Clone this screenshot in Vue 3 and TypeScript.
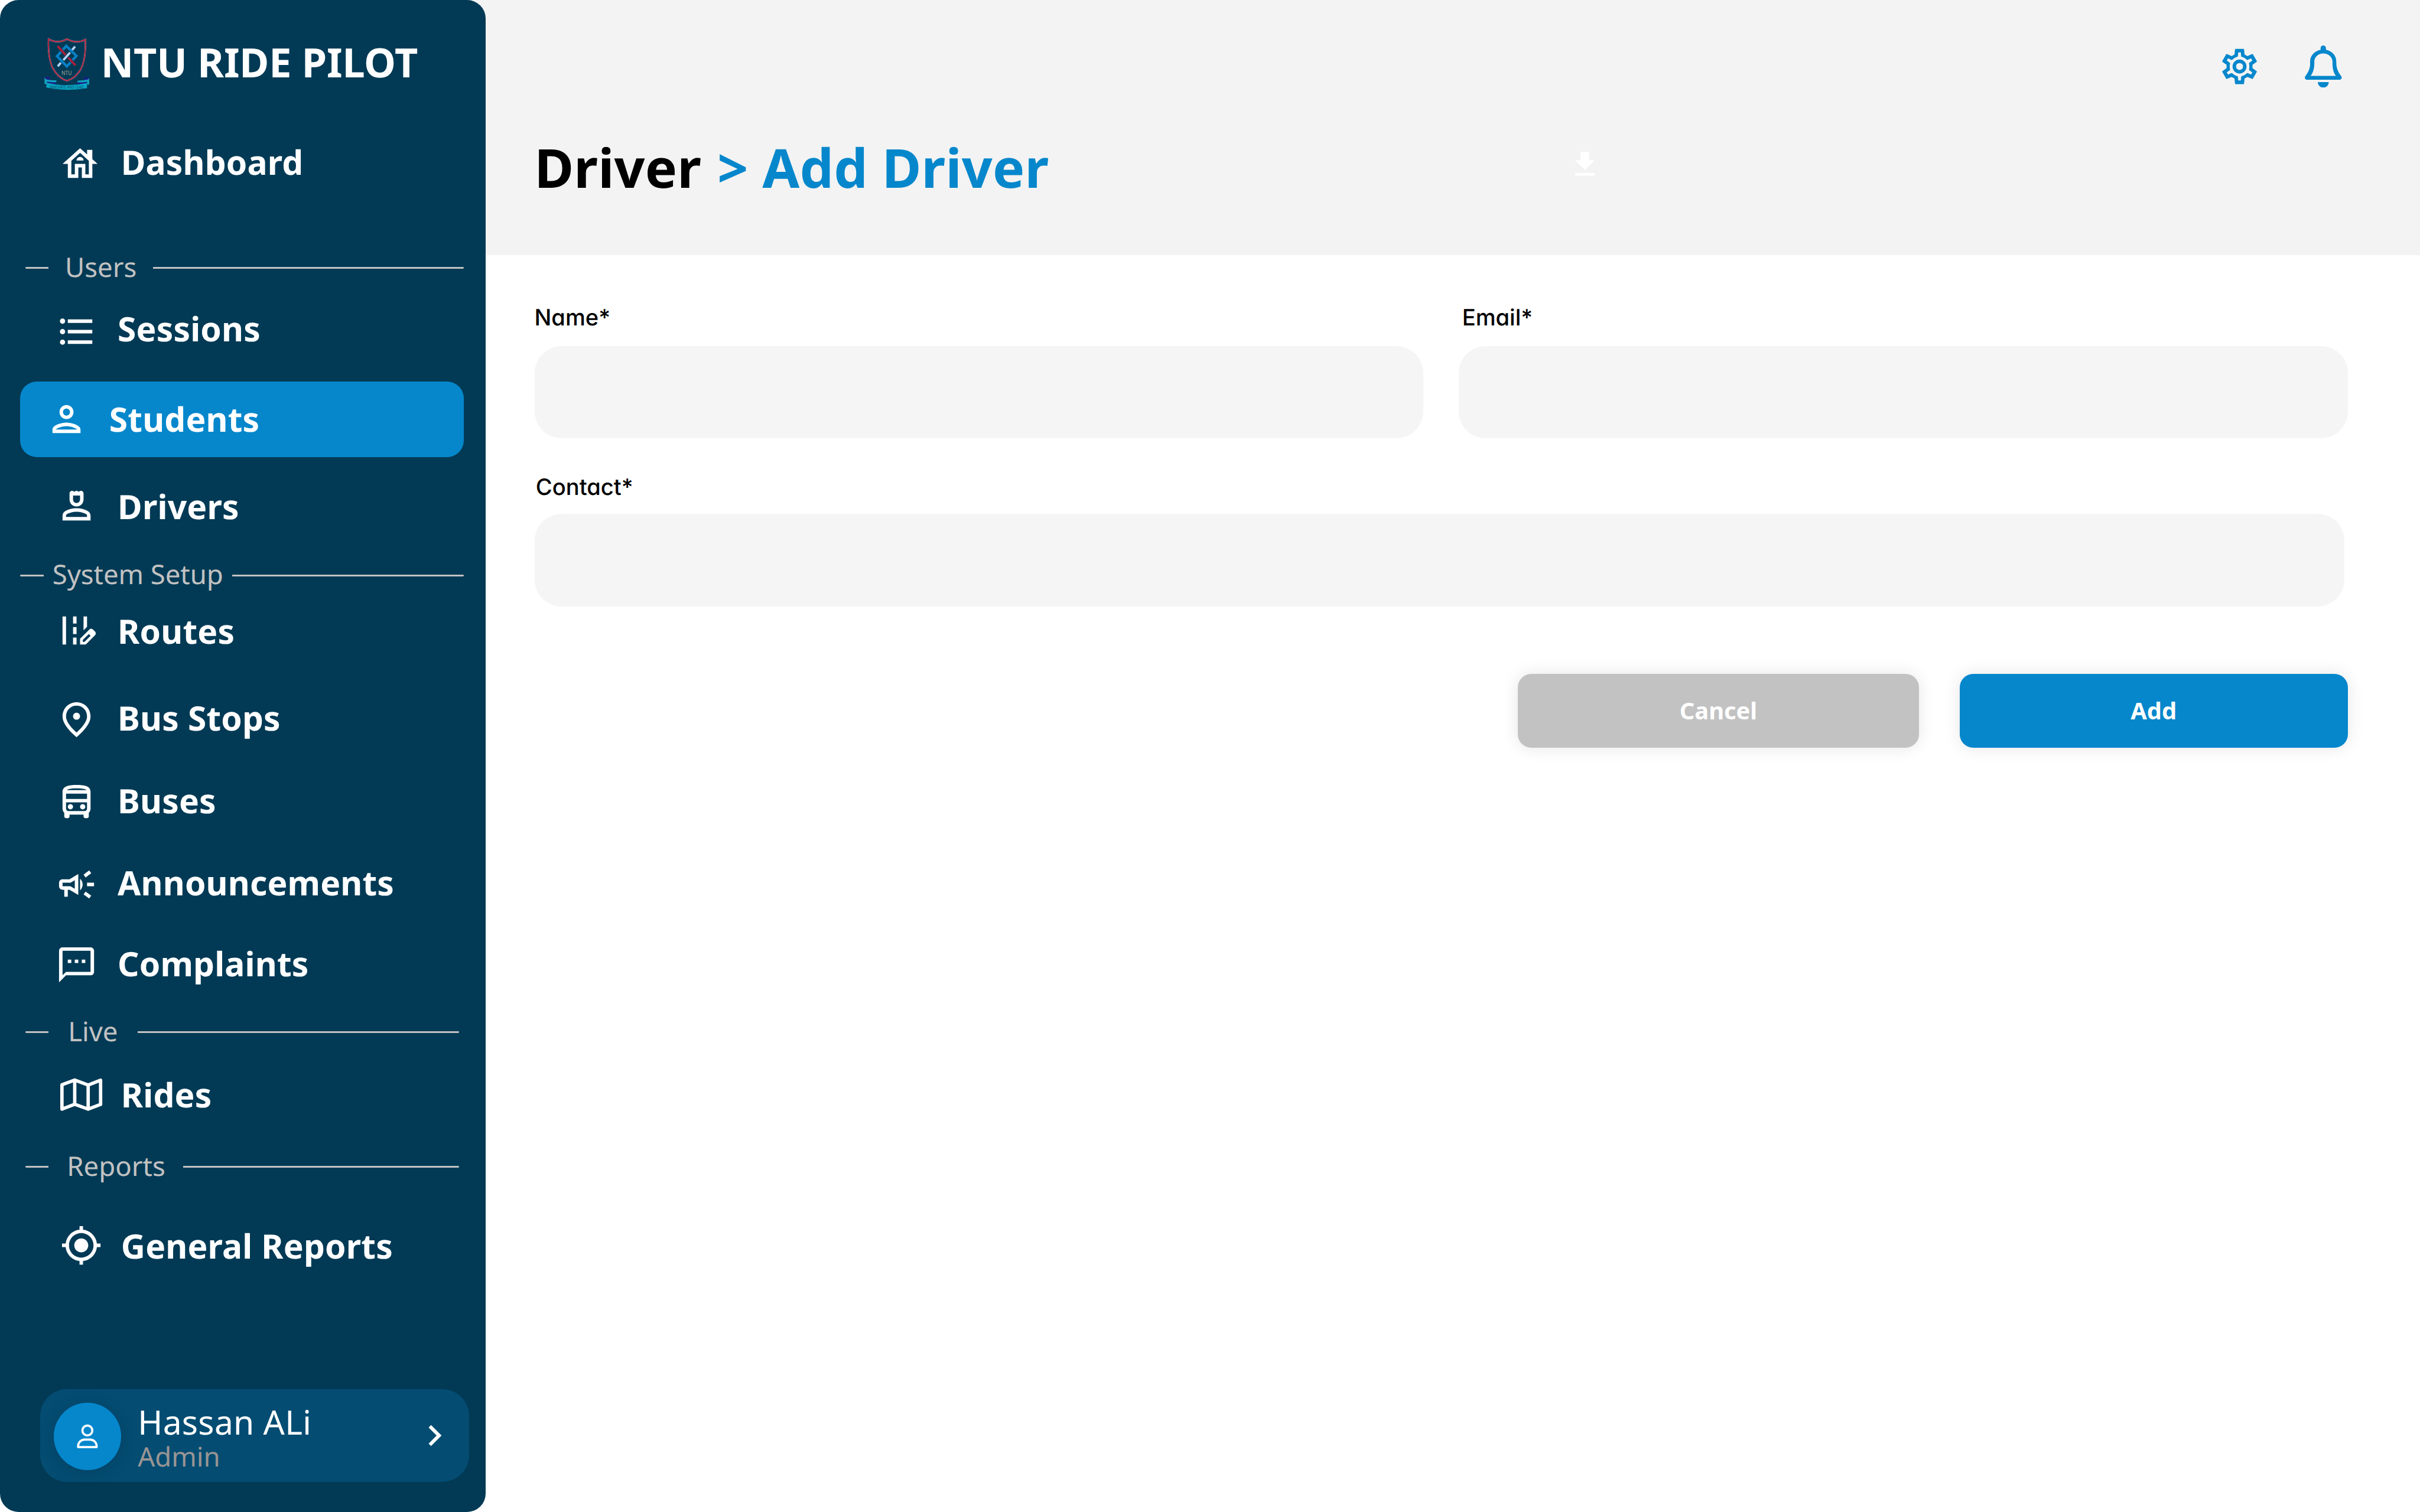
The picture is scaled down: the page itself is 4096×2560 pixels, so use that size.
<script setup lang="ts">
import { ref } from 'vue'

interface NavLink {
  kind: 'link'
  key: string
  label: string
  icon: string
}

interface NavSection {
  kind: 'section'
  key: string
  label: string
}

const entries: (NavLink | NavSection)[] = [
  {
    kind: 'link',
    key: 'dashboard',
    label: 'Dashboard',
    icon: 'M19 9.3V4h-3v2.6L12 3 2 12h3v8h6v-6h2v6h6v-8h3l-3-2.7zM17 18h-2v-6H9v6H7v-7.81l5-4.5 5 4.5V18zM10 10h4c0-1.1-.9-2-2-2s-2 .9-2 2z',
  },
  { kind: 'section', key: 'users', label: 'Users' },
  {
    kind: 'link',
    key: 'sessions',
    label: 'Sessions',
    icon: 'M4 10.5c-.83 0-1.5.67-1.5 1.5s.67 1.5 1.5 1.5 1.5-.67 1.5-1.5-.67-1.5-1.5-1.5zm0-6c-.83 0-1.5.67-1.5 1.5S3.17 7.5 4 7.5 5.5 6.83 5.5 6 4.83 4.5 4 4.5zm0 12c-.83 0-1.5.68-1.5 1.5s.68 1.5 1.5 1.5 1.5-.68 1.5-1.5-.67-1.5-1.5-1.5zM7 19h14v-2H7v2zm0-6h14v-2H7v2zm0-8v2h14V5H7z',
  },
  {
    kind: 'link',
    key: 'students',
    label: 'Students',
    icon: 'M12 6c1.1 0 2 .9 2 2s-.9 2-2 2-2-.9-2-2 .9-2 2-2m0 10c2.7 0 5.8 1.29 6 2H6c.23-.72 3.31-2 6-2m0-12C9.79 4 8 5.79 8 8s1.79 4 4 4 4-1.79 4-4-1.79-4-4-4zm0 10c-2.67 0-8 1.34-8 4v2h16v-2c0-2.66-5.33-4-8-4z',
  },
  {
    kind: 'link',
    key: 'drivers',
    label: 'Drivers',
    icon: 'M18.39 14.56C16.71 13.7 14.53 13 12 13s-4.71.7-6.39 1.56C4.61 15.07 4 16.1 4 17.22V20h16v-2.78c0-1.12-.61-2.15-1.61-2.66zM18 18H6v-.78c0-.38.2-.72.52-.88C7.71 15.73 9.63 15 12 15c2.37 0 4.29.73 5.48 1.34.32.16.52.5.52.88V18zM12 12c2.21 0 4-1.79 4-4V4.5c0-.83-.67-1.5-1.5-1.5-.52 0-.98.27-1.25.67C12.98 3.27 12.52 3 12 3s-.98.27-1.25.67C10.48 3.27 10.02 3 9.5 3 8.67 3 8 3.67 8 4.5V8c0 2.21 1.79 4 4 4zM10 5.7h4V8c0 1.1-.9 2-2 2s-2-.9-2-2V5.7z',
  },
  { kind: 'section', key: 'system', label: 'System Setup' },
  {
    kind: 'link',
    key: 'routes',
    label: 'Routes',
    icon: 'M18 4h-2v7.9l2-2V4zM4 4h2v16H4V4zM10 4h2v4h-2zM10 10h2v4h-2zM10 16h2v4h-2zM22.56 12.59l-1.15-1.15c-.59-.59-1.54-.59-2.12 0L14 16.73V20h3.27l5.29-5.29c.59-.59.59-1.54 0-2.12zM16.58 18.45h-1.03v-1.03L19 13.97 20.03 15l-3.45 3.45z',
  },
  {
    kind: 'link',
    key: 'stops',
    label: 'Bus Stops',
    icon: 'M12 12c-1.1 0-2-.9-2-2s.9-2 2-2 2 .9 2 2-.9 2-2 2zm6-1.8C18 6.57 15.35 4 12 4s-6 2.57-6 6.2c0 2.34 1.95 5.44 6 9.14 4.05-3.7 6-6.8 6-9.14zM12 2c4.2 0 8 3.22 8 8.2 0 3.32-2.67 7.25-8 11.8-5.33-4.55-8-8.48-8-11.8C4 5.22 7.8 2 12 2z',
  },
  {
    kind: 'link',
    key: 'buses',
    label: 'Buses',
    icon: 'M12 2C8 2 4 2.5 4 6v9.5c0 .95.38 1.81 1 2.44V20c0 .55.45 1 1 1h1c.55 0 1-.45 1-1v-1h8v1c0 .55.45 1 1 1h1c.55 0 1-.45 1-1v-2.06c.62-.63 1-1.49 1-2.44V6c0-3.5-3.58-4-8-4zM12 4c3.71 0 5.13.46 5.67 1H6.43C7.03 4.48 8.48 4 12 4zM6 7h12v3H6V7zM18 15.5c0 .83-.67 1.5-1.5 1.5h-9c-.83 0-1.5-.67-1.5-1.5V12h12v3.5zM7 14.5a1.5 1.5 0 1 0 3 0 1.5 1.5 0 1 0-3 0zM14 14.5a1.5 1.5 0 1 0 3 0 1.5 1.5 0 1 0-3 0z',
  },
  {
    kind: 'link',
    key: 'announcements',
    label: 'Announcements',
    icon: 'M18 11v2h4v-2h-4zM16 17.61c.96.71 2.21 1.65 3.2 2.39.4-.53.8-1.07 1.2-1.6-.99-.74-2.24-1.68-3.2-2.4-.4.54-.8 1.08-1.2 1.61zM20.4 5.6c-.4-.53-.8-1.07-1.2-1.6-.99.74-2.24 1.68-3.2 2.4.4.53.8 1.07 1.2 1.6.96-.72 2.21-1.65 3.2-2.4zM4 9c-1.1 0-2 .9-2 2v2c0 1.1.9 2 2 2h1v4h2v-4h1l5 3V6L8 9H4zm5.03 1.71L11 9.53v4.94l-1.97-1.18-.48-.29H4v-2h4.55l.48-.29zM15.5 12c0-1.33-.58-2.53-1.5-3.35v6.69c.92-.81 1.5-2.01 1.5-3.34z',
  },
  {
    kind: 'link',
    key: 'complaints',
    label: 'Complaints',
    icon: 'M20 2H4c-1.1 0-1.99.9-1.99 2L2 22l4-4h14c1.1 0 2-.9 2-2V4c0-1.1-.9-2-2-2zm0 14H6l-2 2V4h16v12zM7 9h2v2H7zM15 9h2v2h-2zM11 9h2v2h-2z',
  },
  { kind: 'section', key: 'live', label: 'Live' },
  { kind: 'link', key: 'rides', label: 'Rides', icon: '' },
  { kind: 'section', key: 'reports', label: 'Reports' },
  {
    kind: 'link',
    key: 'general',
    label: 'General Reports',
    icon: 'M12 8c-2.21 0-4 1.79-4 4s1.79 4 4 4 4-1.79 4-4-1.79-4-4-4zm8.94 3A8.994 8.994 0 0 0 13 3.06V1h-2v2.06A8.994 8.994 0 0 0 3.06 11H1v2h2.06A8.994 8.994 0 0 0 11 20.94V23h2v-2.06A8.994 8.994 0 0 0 20.94 13H23v-2h-2.06zM12 19c-3.87 0-7-3.13-7-7s3.13-7 7-7 7 3.13 7 7-3.13 7-7 7z',
  },
]

const active = ref('students')
const name = ref('')
const email = ref('')
const contact = ref('')

/* The cog is one tooth repeated six times around the centre. */
type Point = [number, number]

function ring(tooth: Point[]): string {
  const points: string[] = []
  for (let i = 0; i < 6; i++) {
    const a = (i * Math.PI) / 3
    for (const [x, y] of tooth) {
      const px = x * Math.cos(a) - y * Math.sin(a)
      const py = x * Math.sin(a) + y * Math.cos(a)
      points.push(`${px.toFixed(2)} ${py.toFixed(2)}`)
    }
  }
  return `M${points.join('L')}Z`
}

const cog =
  ring([[-36, -86], [-32.2, -122], [-31, -125], [-28, -126], [28, -126], [31, -125], [32.2, -122], [36, -86]]) +
  ring([[-33, -62], [-12, -71], [-9, -100], [9, -100], [12, -71], [33, -62]]) +
  'M-50 0a50 50 0 1 0 100 0a50 50 0 1 0-100 0zM-25 0a25 25 0 1 0 50 0a25 25 0 1 0-50 0z'
</script>

<template>
  <div class="page">
    <aside class="sidebar">
      <div class="brand">
        <svg class="crest" viewBox="75 90 325 375">
          <path d="M105 99Q170 136 237 99Q303 136 368 103C372 190 362 262 335 315C312 355 278 385 236 397C196 385 160 352 136 308C110 255 102 180 105 99Z" fill="none" stroke="#d9c3cd" stroke-width="10" />
          <path d="M105 99Q170 136 237 99Q303 136 368 103C372 190 362 262 335 315C312 355 278 385 236 397C196 385 160 352 136 308C110 255 102 180 105 99Z" fill="none" stroke="#ab1f3d" stroke-width="8.5" />
          <g fill="none" stroke-width="16">
            <path d="M232 148L304 219L236 294L166 222Z" stroke="#0a80c6" stroke-width="18" />
            <path d="M259 195L211 249M170 149L228 213M246 231L297 286" stroke="#023a55" stroke-width="22" />
            <path d="M295 152L274 176M259 195L211 249M193 268L171 294" stroke="#b3d1f5" />
            <path d="M170 149L228 213M246 231L297 286" stroke="#ab1f3d" />
          </g>
          <text x="197" y="356" font-size="43" textLength="74" lengthAdjust="spacingAndGlyphs" fill="#a8a58f">NTU</text>
          <path d="M77 372L115 372L116 388L86 385ZM357 374L395 374L394 392L357 387ZM92 398L160 408L160 420L92 412ZM310 410L380 402L380 418L310 420Z" fill="#1d1a8c" />
          <path d="M76 374L88 387Q120 394 161 394L161 408Q120 408 95 401L93 422L77 420ZM395 378L384 389Q350 396 315 396L310 409Q350 409 381 404L381 424L396 424Z" fill="#12a3c0" />
          <path d="M94 411Q165 430 235 428Q310 428 381 413L380 450Q310 462 235 461Q150 458 88 444Z" fill="#08a5c4" />
          <text x="112" y="455" font-size="31" textLength="244" lengthAdjust="spacingAndGlyphs" fill="#0b4a66">INNOVATE AND LEAD</text>
        </svg>
        <span class="brand-name">NTU RIDE PILOT</span>
      </div>

      <nav class="nav">
        <template v-for="entry in entries" :key="entry.key">
          <div v-if="entry.kind === 'section'" class="section" :class="`section-${entry.key}`">
            <i class="rule rule-short"></i>
            <span class="section-label">{{ entry.label }}</span>
            <i class="rule rule-long"></i>
          </div>
          <a v-else class="link" :class="[`link-${entry.key}`, { active: active === entry.key }]" @click="active = entry.key">
            <svg v-if="entry.key === 'rides'" class="icon-map" viewBox="0 0 25 27">
              <path d="M1 7.6L8.6 4.8L16.6 7.8L24 4.9V19.3L16.6 22.1L8.6 19.2L1 22.1ZM8.6 4.8V19.2M16.6 7.8V22.1" fill="none" stroke="#fff" stroke-width="2" stroke-linejoin="round" />
            </svg>
            <svg v-else class="icon" viewBox="0 0 24 24"><path :d="entry.icon" fill="#fff" fill-rule="evenodd" /></svg>
            <span class="link-label">{{ entry.label }}</span>
          </a>
        </template>
      </nav>

      <div class="profile">
        <div class="avatar">
          <svg viewBox="0 0 40 40" fill="none" stroke="#fff" stroke-width="1.3">
            <circle cx="20" cy="16.5" r="2.95" />
            <path d="M14.5 26.4V25.8C14.5 23.6 16.3 21.9 18.4 21.9H21.6C23.7 21.9 25.5 23.6 25.5 25.8V26.4Z" stroke-linejoin="round" />
          </svg>
        </div>
        <div class="who">
          <span class="who-name">Hassan ALi</span>
          <span class="who-role">Admin</span>
        </div>
        <svg class="chevron" viewBox="0 0 24 24"><path d="M10 6L8.59 7.41 13.17 12l-4.58 4.59L10 18l6-6z" fill="#fff" /></svg>
      </div>
    </aside>

    <main class="main">
      <header class="header">
        <div class="actions">
          <svg class="cog" viewBox="-150 -150 300 300"><path :d="cog" fill="#0687cc" fill-rule="evenodd" /></svg>
          <svg class="bell" viewBox="858 143 264 301" fill="#0687cc">
            <path fill-rule="evenodd" d="M971 174V162a19 19 0 0 1 38 0V174C1052 182 1083 216 1083 256V268C1083 306 1098 336 1118 362C1127 373 1119 388 1107 388H873C861 388 853 373 862 362C885 332 895 305 896 280V256C897 214 930 182 971 174ZM990 200C955 200 926 226 926 258V276C925 310 918 336 900 360H1080C1062 336 1057 310 1056 276V258C1056 226 1026 200 990 200Z" />
            <path d="M951 405H1029C1028 428 1012 444 990 444C968 444 952 428 951 405Z" />
          </svg>
        </div>
        <div class="heading">
          <h1 class="title">Driver <span class="crumb">&gt; Add Driver</span></h1>
          <svg class="download" viewBox="0 0 24 24"><path d="M19 9h-4V3H9v6H5l7 7 7-7zM5 18v2h14v-2H5z" fill="#fff" /></svg>
        </div>
      </header>

      <form class="form" @submit.prevent>
        <div class="row">
          <label class="field">
            <span class="label label-name">Name*</span>
            <input v-model="name" class="input" type="text" />
          </label>
          <label class="field">
            <span class="label label-email">Email*</span>
            <input v-model="email" class="input" type="text" />
          </label>
        </div>
        <label class="field field-contact">
          <span class="label label-contact">Contact*</span>
          <input v-model="contact" class="input" type="text" />
        </label>
        <div class="buttons">
          <button type="button" class="btn btn-cancel">Cancel</button>
          <button type="submit" class="btn btn-add">Add</button>
        </div>
      </form>
    </main>
  </div>
</template>

<style>
html {
  font-size: calc(100vw / 144);
}
body {
  margin: 0;
  background: #fff;
}
</style>

<style scoped>
.page {
  display: grid;
  grid-template-columns: 28.9rem 1fr;
  width: 144rem;
  height: 90rem;
  overflow: hidden;
  background: #fff;
  font-family: 'Noto Sans', 'Open Sans', sans-serif;
  text-rendering: geometricPrecision;
}
.page *,
.page {
  box-sizing: border-box;
}
svg {
  display: block;
  flex: none;
}

/* Sidebar */
.sidebar {
  position: relative;
  z-index: 1;
  display: flex;
  flex-direction: column;
  height: 90rem;
  border-radius: 1.1rem;
  background: #023a55;
  color: #fff;
}
.brand {
  display: flex;
  align-items: flex-start;
  height: 5.7rem;
  padding: 2rem 0 0 2.625rem;
}
.crest {
  width: 2.708rem;
  height: 3.125rem;
  margin: 0.25rem 0.667rem 0 0;
  overflow: visible;
}
.brand-name {
  padding-top: 0.06rem;
  font-size: 2.4rem;
  line-height: 3.3376rem;
  font-weight: 700;
  letter-spacing: -0.005rem;
  white-space: nowrap;
}
.link {
  display: flex;
  align-items: flex-start;
  gap: 1.2rem;
  height: 2.7rem;
  padding-left: 3.3rem;
  font-size: 2rem;
  line-height: 2.68rem;
  font-weight: 700;
  letter-spacing: 0.006rem;
  white-space: nowrap;
}
.icon {
  width: 2.5rem;
  height: 2.5rem;
  margin-top: 0.2rem;
}
.icon-map {
  width: 2.5rem;
  height: 2.7rem;
}
.link-dashboard { margin-top: 2.6rem; padding-left: 3.5rem; }
.link-sessions { margin-top: 1.2rem; }
.link-sessions .icon { margin-top: 0.3rem; }
.link-students { margin-top: 1.8rem; }
.link-drivers { margin-top: 1.6rem; }
.link-drivers .icon { margin-top: 0.1rem; }
.link-routes { margin-top: 0.9rem; }
.link-routes .icon { margin-top: 0.1rem; }
.link-stops { margin-top: 2.5rem; }
.link-buses { margin-top: 2.2rem; }
.link-announcements { margin-top: 2.2rem; }
.link-complaints { margin-top: 2.1rem; }
.link-rides { margin-top: 1.3rem; padding-left: 3.6rem; gap: 1.1rem; }
.link-general { margin-top: 2.3rem; padding-left: 3.6rem; gap: 1.1rem; }
.link-general .icon { margin-top: 0.1rem; }
.link.active {
  height: 4.5rem;
  margin-left: 1.2rem;
  margin-right: 1.3rem;
  padding: 0.9rem 0 0 1.5rem;
  gap: 1.3rem;
  border-radius: 1rem;
  background: #0687cc;
}
.link.active .icon { margin-top: 0.1rem; }

.section {
  display: flex;
  align-items: flex-start;
  height: 2.2rem;
  padding: 0 1.3rem 0 1.5rem;
  color: #c2c2c2;
  font-size: 1.6rem;
  line-height: 2.22rem;
  white-space: nowrap;
}
.rule {
  height: 0.1rem;
  margin-top: 1.1rem;
  background: #c2c2c2;
}
.rule-short {
  width: 1.4rem;
  border-radius: 0.05rem 0 0 0.05rem;
}
.rule-long {
  flex: 1;
  border-radius: 0 0.05rem 0.05rem 0;
}
.section-users { margin-top: 3.8rem; }
.section-users .section-label { width: 6.2rem; padding-left: 0.97rem; }
.section-system { margin-top: 1.6rem; padding-left: 1.2rem; }
.section-system .section-label { width: 11.2rem; padding-left: 0.52rem; letter-spacing: -0.002rem; }
.section-live { margin-top: 1.6rem; padding-right: 1.6rem; }
.section-live .section-label { width: 5.3rem; padding-left: 1.15rem; }
.section-reports { margin-top: 1.8rem; padding-right: 1.6rem; }
.section-reports .section-label { width: 8rem; padding-left: 1.08rem; }

.profile {
  display: flex;
  align-items: flex-start;
  width: 25.5rem;
  height: 5.5rem;
  margin: auto 0 1.8rem 2.4rem;
  padding: 0.8rem 0 0 0.8rem;
  border-radius: 1.6rem;
  background: #044c72;
}
.avatar {
  width: 4rem;
  height: 4rem;
  border-radius: 50%;
  background: #0687cc;
  box-shadow: 0 0.1rem 1rem rgba(0, 0, 0, 0.12);
}
.avatar svg {
  width: 4rem;
  height: 4rem;
}
.who {
  display: flex;
  flex-direction: column;
  width: 17.4rem;
  padding-left: 1rem;
}
.who-name {
  margin-top: -0.2rem;
  font-size: 2rem;
  line-height: 2.7rem;
  letter-spacing: 0.01rem;
}
.who-role {
  margin-top: -0.2rem;
  color: #999594;
  font-size: 1.6rem;
  line-height: 1.76rem;
}
.chevron {
  width: 2.5rem;
  height: 2.5rem;
  margin-top: 0.7rem;
}

/* Header */
.header {
  height: 15.2rem;
  margin-left: -1.3rem;
  padding-left: 4.2rem;
  background: #f3f3f3;
}
.actions {
  display: flex;
  justify-content: flex-end;
  align-items: flex-start;
  gap: 2.65rem;
  height: 7.8rem;
  padding: 2.7rem 4.65rem 0 0;
}
.cog {
  width: 2.5rem;
  height: 2.5rem;
}
.bell {
  width: 2.2rem;
  height: 2.508rem;
}
.heading {
  display: flex;
  align-items: flex-start;
}
.title {
  width: 61.5rem;
  margin: 0;
  color: #000;
  font-size: 3.2rem;
  line-height: 4.3168rem;
  font-weight: 700;
  letter-spacing: 0.006rem;
  white-space: nowrap;
}
.crumb {
  margin-left: 0.12rem;
  color: #0687cc;
}
.download {
  width: 2rem;
  height: 2rem;
  margin-top: 1rem;
}

/* Form */
.form {
  display: flex;
  flex-direction: column;
  padding: 2.8rem 4.3rem 0 2.9rem;
}
.row {
  display: flex;
  gap: 2.1rem;
}
.field {
  display: flex;
  flex: 1;
  flex-direction: column;
}
.field-contact {
  margin: 2rem 0.2rem 0 0;
}
.label {
  height: 2.6rem;
  color: #000;
  font-family: Inter, 'Noto Sans', sans-serif;
  font-size: 1.34rem;
  line-height: 1.88rem;
  font-weight: 500;
  font-feature-settings: 'cv11' 1;
}
.field-contact .label {
  height: 2.5rem;
}
.label-email { padding-left: 0.2rem; }
.label-contact { padding-left: 0.08rem; }
.input {
  width: 100%;
  height: 5.5rem;
  padding: 0 1.6rem;
  border: 0;
  border-radius: 1.6rem;
  outline: 0;
  background: #f5f5f5;
  font: inherit;
  font-size: 1.6rem;
}
.buttons {
  display: flex;
  justify-content: flex-end;
  gap: 2.4rem;
  margin-top: 4rem;
}
.btn {
  height: 4.4rem;
  padding: 0;
  border: 0;
  border-radius: 0.8rem;
  box-shadow: 0 0 1rem rgba(0, 0, 0, 0.1);
  color: #fff;
  font-family: 'Noto Sans', 'Open Sans', sans-serif;
  font-size: 1.4rem;
  line-height: 1.9rem;
  font-weight: 700;
}
.btn-cancel {
  width: 23.9rem;
  background: #c2c2c2;
}
.btn-add {
  width: 23.1rem;
  background: #0687cc;
}
</style>
